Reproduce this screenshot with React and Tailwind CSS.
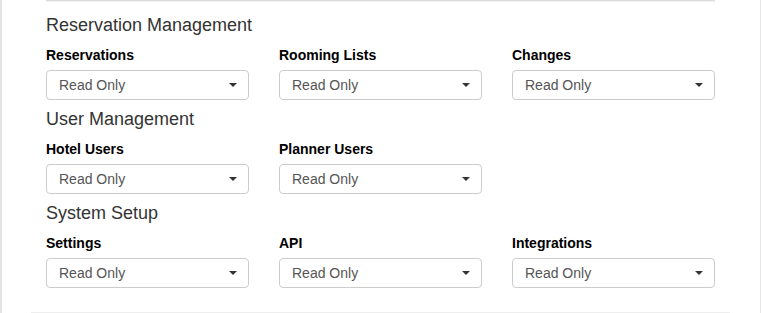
import { useState } from "react";

const SECTIONS = [
  {
    title: "Reservation Management",
    fields: ["Reservations", "Rooming Lists", "Changes"],
  },
  {
    title: "User Management",
    fields: ["Hotel Users", "Planner Users"],
  },
  {
    title: "System Setup",
    fields: ["Settings", "API", "Integrations"],
  },
];

const OPTIONS = ["No Access", "Read Only", "Full Access"];

export default function App() {
  const [values, setValues] = useState({});

  const handleChange = (key, value) => {
    setValues((prev) => ({ ...prev, [key]: value }));
  };

  return (
    <div
      className="h-[313px] w-[761px] overflow-hidden bg-white"
      style={{ fontFamily: '"Liberation Sans", Arial, sans-serif' }}
    >
      <div className="flex h-full flex-col border-l-2 border-r border-l-[#e3e3e3] border-r-[#e6e6e6] pl-[29px] pr-[30px]">
        {/* top divider from previous panel */}
        <div className="mx-[15px] h-[2px] shrink-0 border-t border-[#dcdcdc] bg-[#f1f1f1]" />

        <div className="flex-1 pt-[13px]">
          {SECTIONS.map((section) => (
            <div key={section.title} className="mb-[9px]">
              <h4 className="mx-[15px] mb-[10px] text-[18px] leading-[20px] text-[#333]">
                {section.title}
              </h4>
              <div className="grid grid-cols-3">
                {section.fields.map((f) => (
                  <Field
                    key={f}
                    label={f}
                    value={values[f] || "Read Only"}
                    onChange={(v) => handleChange(f, v)}
                  />
                ))}
              </div>
            </div>
          ))}
        </div>

        <div className="h-px shrink-0 bg-[#eeeeee]" />
      </div>
    </div>
  );
}

function Field({ label, value, onChange }) {
  return (
    <div className="px-[15px]">
      <div className="mb-[5px] text-[14px] font-bold leading-[20px] text-black">
        {label}
      </div>
      <div className="relative h-[30px] w-full">
        <select
          value={value}
          onChange={(e) => onChange(e.target.value)}
          className="h-[30px] w-full appearance-none rounded-[4px] border border-[#cccccc] bg-white pl-[12px] pr-8 text-[14px] text-[#555] outline-none"
        >
          {OPTIONS.map((o) => (
            <option key={o} value={o}>
              {o}
            </option>
          ))}
        </select>
        <svg
          className="pointer-events-none absolute right-[12px] top-[13px]"
          width="8"
          height="4"
          viewBox="0 0 8 4"
        >
          <path d="M0 0 H8 L4 4 Z" fill="#333" />
        </svg>
      </div>
    </div>
  );
}
